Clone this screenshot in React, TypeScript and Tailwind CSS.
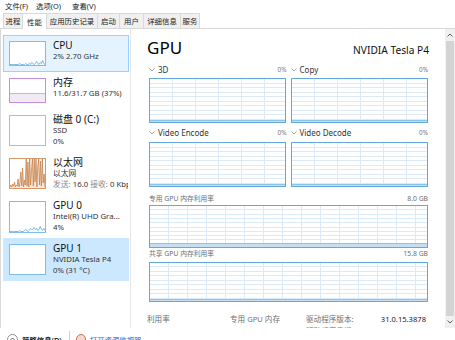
import React from "react";

function Chart({ w, h, colW, rows, fill = 0 }: { w: number; h: number; colW: number; rows: number; fill?: number }) {
  const vs: number[] = [];
  for (let x = colW; x < w - 2; x += colW) vs.push(Math.round(x));
  const hs: number[] = [];
  for (let i = 1; i < rows; i++) hs.push(Math.round((i * h) / rows));
  return (
    <svg width={w} height={h} className="block">
      <rect x={0} y={0} width={w} height={h} fill="#ffffff" />
      {hs.map((y) => (
        <line key={"h" + y} x1={0} x2={w} y1={y + 0.5} y2={y + 0.5} stroke="#dbeaf6" strokeWidth={1} />
      ))}
      {vs.map((x) => (
        <line key={"v" + x} x1={x + 0.5} x2={x + 0.5} y1={0} y2={h} stroke="#dbeaf6" strokeWidth={1} />
      ))}
      <rect x={1} y={h - 2 - fill} width={w - 2} height={fill + 1} fill="#c6def2" />
      <line x1={1} x2={w - 1} y1={h - 2.5 - fill} y2={h - 2.5 - fill} stroke="#8ec2e8" strokeWidth={1} />
      <rect x={0.5} y={0.5} width={w - 1} height={h - 1} fill="none" stroke="#63a8dd" strokeWidth={1} />
    </svg>
  );
}

function Thumb({ h, color, children }: { h: number; color: string; children?: React.ReactNode }) {
  return (
    <svg width={37} height={h} className="block shrink-0">
      <rect x={0} y={0} width={37} height={h} fill="#ffffff" />
      {children}
      <rect x={0.5} y={0.5} width={36} height={h - 1} fill="none" stroke={color} strokeWidth={1} />
    </svg>
  );
}

function lowLine(h: number, vals: number[]) {
  const step = 35 / (vals.length - 1);
  return vals.map((v, i) => `${(1 + i * step).toFixed(1)},${(h - 1.5 - v).toFixed(1)}`).join(" ");
}

const cpuVals = [0, 0, 0, 0, 0, 0, 0, 0, 1, 0, 0, 0, 0, 1, 0, 0, 1, 0, 2, 1, 0, 1, 3, 1, 0, 2, 1, 4, 1, 0];
const gpu0Vals = [0, 0, 0, 0, 0, 0, 0, 0, 1, 0, 0, 0, 1, 2, 1, 0, 1, 3, 2, 2, 4, 2, 3, 1, 2, 5, 2, 1, 3, 1];
const ethVals = [1, 3, 1, 4, 2, 6, 1, 3, 2, 9, 1, 5, 16, 2, 20, 1, 8, 3, 29, 2, 26, 1, 29, 3, 18, 29, 2, 29, 6, 29, 1, 22, 29, 3, 27, 2, 29, 5, 14, 1];

function EthThumb() {
  const H = 31;
  const step = 35 / (ethVals.length - 1);
  const pts = ethVals.map((v, i) => `${(1 + i * step).toFixed(1)},${(H - 1 - Math.min(v, 29)).toFixed(1)}`).join(" ");
  return (
    <Thumb h={H} color="#d29a6c">
      <polygon points={`1,${H - 1} ${pts} 36,${H - 1}`} fill="#f8e6d8" />
      <polyline points={pts} fill="none" stroke="#c7834d" strokeWidth={0.8} />
    </Thumb>
  );
}

function Chevron() {
  return (
    <svg width={6} height={4} className="block shrink-0">
      <polyline points="0.5,0.5 3,3 5.5,0.5" fill="none" stroke="#8a8a8a" strokeWidth={0.8} />
    </svg>
  );
}

function SideItem({
  tall,
  state,
  thumb,
  title,
  lines,
}: {
  tall?: boolean;
  state?: "hover" | "sel";
  thumb: React.ReactNode;
  title: string;
  lines: React.ReactNode[];
}) {
  return (
    <div
      className={
        (tall ? "h-[43px] " : "h-[37px] ") +
        (state === "hover"
          ? "bg-[#e5f3ff] border-[#99d1ff] "
          : state === "sel"
          ? "bg-[#cce8ff] border-[#cce8ff] "
          : "border-transparent ") +
        "flex items-start border pl-[5px] pt-[5px]"
      }
    >
      {thumb}
      <div className="ml-[7px] -mt-[2px] min-w-0 flex-1 overflow-hidden">
        <div className="text-[10px] leading-[12px] text-[#111] whitespace-nowrap">{title}</div>
        {lines.map((l, i) => (
          <div key={i} className="text-[7.8px] leading-[11px] text-[#333] whitespace-nowrap overflow-hidden">
            {l}
          </div>
        ))}
      </div>
    </div>
  );
}

const tabs: [string, string, boolean][] = [
  ["进程", "w-[19px]", false],
  ["性能", "w-[24px]", true],
  ["应用历史记录", "w-[51px]", false],
  ["启动", "w-[22px]", false],
  ["用户", "w-[24px]", false],
  ["详细信息", "w-[37px]", false],
  ["服务", "w-[20px]", false],
];

function SmallChart({ label, mt, gap }: { label: string; mt: string; gap: string }) {
  return (
    <div className={mt}>
      <div className="flex h-[10px] items-center justify-between">
        <div className="flex items-center gap-[3px]">
          <Chevron />
          <span className="text-[8px] leading-[10px] text-[#333]">{label}</span>
        </div>
        <span className="text-[6.4px] leading-[10px] text-[#777]">0%</span>
      </div>
      <div className={gap}>
        <Chart w={137} h={45} colW={23} rows={10} />
      </div>
    </div>
  );
}

export default function App() {
  return (
    <div className="w-[455px] h-[340px] overflow-hidden bg-white text-[#1a1a1a] font-['Noto_Sans','Noto_Sans_CJK_SC',sans-serif]">
      {/* menu bar */}
      <div className="flex h-[13px] items-center pl-[5px] text-[7.4px] leading-[13px] text-[#1a1a1a]">
        <span className="w-[31px]">文件(F)</span>
        <span className="w-[36px]">选项(O)</span>
        <span>查看(V)</span>
      </div>

      {/* tabs */}
      <div className="flex h-[16px] items-end border-b border-[#d9d9d9] pl-[3px]">
        {tabs.map(([t, w, sel], i) => (
          <div
            key={t}
            className={
              w +
              (sel ? " h-[16px] -mb-px bg-white" : " h-[15px] bg-[#f0f0f0]") +
              (i === tabs.length - 1 ? " border-r" : "") +
              " flex items-center justify-center border-l border-t border-[#d9d9d9] text-[7.4px] leading-[12px] text-[#1a1a1a]"
            }
          >
            {t}
          </div>
        ))}
      </div>

      {/* main */}
      <div className="flex h-[299px] border-l border-[#d9d9d9]">
        {/* sidebar */}
        <div className="w-[130px] shrink-0 overflow-hidden border-r border-[#e6e6e6] pl-[2px] pr-[1px] pt-[6px]">
          <SideItem
            state="hover"
            title="CPU"
            lines={["2% 2.70 GHz"]}
            thumb={
              <Thumb h={25} color="#7fbde9">
                <polyline points={lowLine(25, cpuVals)} fill="none" stroke="#5aa6dc" strokeWidth={0.8} />
              </Thumb>
            }
          />
          <SideItem
            title="内存"
            lines={["11.6/31.7 GB (37%)"]}
            thumb={
              <Thumb h={25} color="#c58fd8">
                <rect x={1} y={15} width={35} height={9} fill="#f1e9f3" />
                <line x1={1} x2={36} y1={15.5} y2={15.5} stroke="#d5aee3" strokeWidth={1} />
              </Thumb>
            }
          />
          <SideItem tall title="磁盘 0 (C:)" lines={["SSD", "0%"]} thumb={<Thumb h={31} color="#9fd186" />} />
          <SideItem
            tall
            title="以太网"
            lines={[
              "以太网",
              <span key="e">
                <span className="text-[#8a8a8a]">发送:</span> 16.0 <span className="text-[#8a8a8a]">接收:</span> 0 Kbps
              </span>,
            ]}
            thumb={<EthThumb />}
          />
          <SideItem
            tall
            title="GPU 0"
            lines={["Intel(R) UHD Gra...", "4%"]}
            thumb={
              <Thumb h={32} color="#7fbde9">
                <polyline points={lowLine(32, gpu0Vals)} fill="none" stroke="#5aa6dc" strokeWidth={0.8} />
              </Thumb>
            }
          />
          <SideItem
            tall
            state="sel"
            title="GPU 1"
            lines={["NVIDIA Tesla P4", "0% (31 °C)"]}
            thumb={<Thumb h={31} color="#7fbde9" />}
          />
        </div>

        {/* right panel */}
        <div className="min-w-0 flex-1 overflow-hidden pl-[16px] pr-[16px] pt-[8px]">
          <div className="flex h-[22px] items-baseline justify-between">
            <span className="text-[17px] leading-[22px] text-[#000]">GPU</span>
            <span className="text-[10.2px] leading-[22px] text-[#111]">NVIDIA Tesla P4</span>
          </div>

          <div className="ml-[2px] mr-[1px]">
            <div className="mt-[6px] grid grid-cols-2 gap-x-[4px]">
              <SmallChart label="3D" mt="" gap="mt-[3px]" />
              <SmallChart label="Copy" mt="" gap="mt-[3px]" />
              <SmallChart label="Video Encode" mt="mt-[5px]" gap="mt-[4px]" />
              <SmallChart label="Video Decode" mt="mt-[5px]" gap="mt-[4px]" />
            </div>

            <div className="mt-[7px] flex h-[10px] items-center justify-between text-[6.8px] leading-[10px] text-[#6e6e6e]">
              <span>专用 GPU 内存利用率</span>
              <span>8.0 GB</span>
            </div>
            <div className="mt-[1px]">
              <Chart w={279} h={43} colW={19} rows={10} fill={2} />
            </div>
            <div className="mt-[1px] flex h-[10px] items-center justify-between text-[6.8px] leading-[10px] text-[#6e6e6e]">
              <span>共享 GPU 内存利用率</span>
              <span>15.8 GB</span>
            </div>
            <div className="mt-[3px]">
              <Chart w={279} h={40} colW={19} rows={9} />
            </div>
          </div>

          {/* stats */}
          <div className="mt-[12px] grid grid-cols-[83px_76px_1fr]">
            <div className="text-[7.6px] leading-[10px] text-[#6e6e6e]">利用率</div>
            <div className="text-[7.6px] leading-[10px] text-[#6e6e6e]">专用 GPU 内存</div>
            <div className="flex justify-between pr-[3px] text-[7.6px] leading-[10px]">
              <span className="text-[#6e6e6e]">驱动程序版本:</span>
              <span className="text-[#1a1a1a]">31.0.15.3878</span>
            </div>
            <div className="text-[13px] leading-[16px] text-[#111]">0%</div>
            <div className="text-[13px] leading-[16px] text-[#111]">0.1/8.0 GB</div>
            <div className="flex justify-between pr-[3px] text-[7.6px] leading-[14px]">
              <span className="text-[#6e6e6e]">驱动程序日期:</span>
              <span className="text-[#1a1a1a]">2023/1/13</span>
            </div>
          </div>
        </div>

        {/* scrollbar */}
        <div className="flex w-[10px] shrink-0 flex-col items-center bg-[#f0f0f0]">
          <div className="flex h-[12px] items-center">
            <svg width={6} height={4} className="block">
              <polyline points="0.5,3.5 3,1 5.5,3.5" fill="none" stroke="#606060" strokeWidth={1} />
            </svg>
          </div>
          <div className="w-[8px] flex-1 bg-[#d4d4d4]" />
          <div className="flex h-[12px] items-center">
            <svg width={6} height={4} className="block">
              <polyline points="0.5,0.5 3,3 5.5,0.5" fill="none" stroke="#606060" strokeWidth={1} />
            </svg>
          </div>
        </div>
      </div>

      {/* bottom bar */}
      <div className="flex h-[12px] items-start pl-[7px] pt-[6px]">
        <svg width={11} height={11} className="block shrink-0">
          <circle cx={5.5} cy={5.5} r={5} fill="none" stroke="#7a7a7a" strokeWidth={0.8} />
          <polyline points="3,6.5 5.5,4 8,6.5" fill="none" stroke="#444" strokeWidth={0.8} />
        </svg>
        <span className="ml-[4px] text-[7.4px] leading-[12px] font-semibold text-[#222]">简略信息(D)</span>
        <div className="ml-[7px] -mt-[3px] h-[12px] w-px bg-[#cfcfcf]" />
        <svg width={10} height={10} className="ml-[6px] block shrink-0">
          <circle cx={5} cy={5} r={4.5} fill="#f4d7cf" stroke="#b85a48" strokeWidth={0.8} />
        </svg>
        <span className="ml-[4px] text-[7.4px] leading-[12px] text-[#0066cc]">打开资源监视器</span>
      </div>
    </div>
  );
}
